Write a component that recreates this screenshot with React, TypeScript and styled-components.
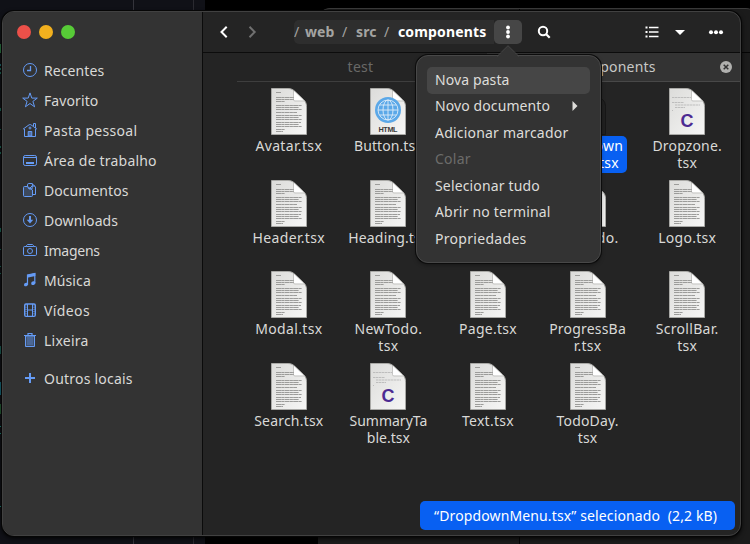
import React from "react";
import styled, { createGlobalStyle, css } from "styled-components";

const Global = createGlobalStyle`
  * { box-sizing: border-box; }
  body { margin: 0; background: #000; overflow: hidden; }
`;

const Desktop = styled.div`
  position: relative;
  width: 750px;
  height: 544px;
  overflow: hidden;
  background: #000;
  color: #d9d9d7;
  font: 14px/17px "Noto Sans", "Open Sans", sans-serif;
  white-space: nowrap;
`;

const EditorWindow = styled.div`
  position: absolute;
  inset: 0 auto 0 0;
  width: 205px;
  background: linear-gradient(90deg, transparent 133px, #34343b 133px, #34343b 134px, transparent 134px, transparent 193px, #2a2a30 193px, #2a2a30 194px, transparent 194px), #101117;
`;

const CodeMark = styled.i<{ $top: number; $height: number; $color: string }>`
  position: absolute;
  left: 0;
  top: ${(p) => p.$top}px;
  width: 1px;
  height: ${(p) => p.$height}px;
  background: ${(p) => p.$color};
`;

const BackWindow = styled.div`
  position: absolute;
  left: 318px;
  top: 8px;
  width: 440px;
  height: 560px;
  border-radius: 12px 12px 0 0;
  border-top: 1px solid #3b3b3b;
  background: linear-gradient(#050505, #050505) 201px 0 / 1px 100% no-repeat,
    linear-gradient(#050505, #050505) 0 43px / 100% 1px no-repeat, #1b1b1b;
`;

const FileManager = styled.main`
  position: absolute;
  left: 2px;
  top: 11px;
  width: 739px;
  height: 525px;
  display: flex;
  overflow: hidden;
  border: 1px solid #414141;
  border-radius: 12px;
  background: #242424;
  box-shadow: 0 0 0 1px #060606, 0 2px 5px #000;
`;

const Sidebar = styled.aside`
  width: 200px;
  flex: none;
  border-right: 1px solid #0b0b0b;
  background: #333;
`;

const WindowControls = styled.div`
  display: flex;
  gap: 8px;
  padding: 13px 0 0 14px;
`;

const Light = styled.span<{ $color: string }>`
  width: 14px;
  height: 14px;
  border-radius: 50%;
  background: ${(p) => p.$color};
`;

const Places = styled.nav`
  display: flex;
  flex-direction: column;
  padding: 16px 0 0 19px;
`;

const Place = styled.a<{ $gap?: boolean }>`
  display: flex;
  align-items: center;
  gap: 6px;
  height: 30px;
  margin-top: ${(p) => (p.$gap ? 8 : 0)}px;
  svg { width: 16px; height: 16px; color: #659bf5; fill: none; stroke: currentColor; stroke-width: 1; }
`;

const Text = styled.span<{ $ls?: number }>`
  letter-spacing: ${(p) => p.$ls ?? 0}px;
`;

const Content = styled.section`
  flex: 1;
  min-width: 0;
  display: flex;
  flex-direction: column;
`;

const Header = styled.header`
  height: 41px;
  flex: none;
  display: flex;
  align-items: center;
  border-bottom: 1px solid #0c0c0c;
  padding-left: 14px;
`;

const IconButton = styled.button<{ $w: number; $active?: boolean; $dim?: boolean; $ml?: number }>`
  display: flex;
  align-items: center;
  justify-content: center;
  width: ${(p) => p.$w}px;
  height: 24px;
  flex: none;
  margin: 0 0 0 ${(p) => p.$ml ?? 0}px;
  padding: 0;
  border: 0;
  border-radius: 5px;
  color: ${(p) => (p.$dim ? "#707070" : "#fff")};
  background: ${(p) => (p.$active ? "#464646" : "transparent")};
  svg { width: 16px; height: 16px; display: block; }
`;

const PathBar = styled.div`
  display: flex;
  align-items: center;
  width: 200px;
  height: 24px;
  margin-left: 34px;
  overflow: hidden;
  border-radius: 5px 0 0 5px;
  background: #2e2e2e;
  color: #a4a4a2;
  font-weight: 700;
  line-height: 15px;
  padding-bottom: 1px;
`;

const Crumb = styled.span<{ $w: number; $ls?: number; $current?: boolean }>`
  width: ${(p) => p.$w}px;
  flex: none;
  letter-spacing: ${(p) => p.$ls ?? 0}px;
  color: ${(p) => (p.$current ? "#fff" : "inherit")};
`;

const Slash = styled.span<{ $w: number }>`
  width: ${(p) => p.$w}px;
  flex: none;
  font-weight: 400;
`;

const Tabs = styled.div`
  display: grid;
  grid-template-columns: 250px 1fr;
  height: 29px;
  margin-left: 34px;
`;

const Tab = styled.div<{ $active?: boolean }>`
  display: flex;
  align-items: center;
  justify-content: center;
  position: relative;
  padding: 0 ${(p) => (p.$active ? 0 : 3)}px 2px 0;
  border-bottom: 1px solid ${(p) => (p.$active ? "#484848" : "#3e3e3e")};
  background: ${(p) => (p.$active ? "#333" : "transparent")};
  color: ${(p) => (p.$active ? "#c8c8c6" : "#696967")};
`;

const CloseBadge = styled.span`
  position: absolute;
  right: 8px;
  top: 8px;
  width: 12px;
  height: 12px;
  svg { display: block; }
`;

const FileGrid = styled.div`
  display: grid;
  grid-template-columns: repeat(5, 99.6px);
  grid-auto-rows: 91.7px;
  padding: 6px 0 0 36px;
`;

const File = styled.div`
  display: flex;
  flex-direction: column;
  align-items: center;
  svg { width: 36px; height: 47px; flex: none; display: block; }
`;

const FileName = styled.div<{ $selected?: boolean; $ls: number }>`
  padding: 2px 3px 0;
  text-align: center;
  letter-spacing: ${(p) => p.$ls}px;
  white-space: pre;
  ${(p) =>
    p.$selected &&
    css`
      width: 78px;
      height: 37px;
      margin-top: 1px;
      padding-top: 1px;
      border-radius: 5px;
      color: #fff;
      background: #0860f2;
    `}
`;

const Status = styled.div`
  position: absolute;
  left: 420px;
  top: 501px;
  width: 315px;
  height: 29px;
  display: flex;
  align-items: center;
  padding-left: 14px;
  border-radius: 5px;
  background: #0860f2;
  color: #fff;
  white-space: pre;
`;

const Popover = styled.div`
  position: absolute;
  left: 416px;
  top: 55px;
  width: 185px;
  height: 208px;
  padding: 11px 10px;
  border: 1px solid #484848;
  border-radius: 12px;
  background: #333;
  box-shadow: 0 0 0 1px #0c0c0c, 0 2px 4px rgba(0, 0, 0, 0.4);
`;

const Arrow = styled.svg`
  position: absolute;
  left: 79px;
  top: -11px;
  width: 24px;
  height: 13px;
`;

const MenuItem = styled.div<{ $hover?: boolean; $disabled?: boolean }>`
  display: flex;
  align-items: center;
  justify-content: space-between;
  height: 26.5px;
  padding: 0 12px 2px 8px;
  border-radius: 5px;
  color: ${(p) => (p.$disabled ? "#6c6c6a" : "#deddda")};
  background: ${(p) => (p.$hover ? "#464646" : "transparent")};
`;

const places: { name: string; ls: number; gap?: boolean; icon: React.ReactNode }[] = [
  { name: "Recentes", ls: 0.1, icon: <><circle cx="8" cy="8" r="6.5" /><path d="M8.5 4v4.5H5" strokeWidth="1.3" /></> },
  { name: "Favorito", ls: 0.1, icon: <path d="m8 .9 1.8 5.2h5.5l-4.4 3.3 1.7 5.4L8 11.5l-4.6 3.3 1.7-5.4L.7 6.1h5.5z" /> },
  { name: "Pasta pessoal", ls: 0.3, icon: <><path d="M2.5 7v7.5h11V7M1 7.2l6.2-4.5h1.6L15 7.2M11.5 4V1.5h2V6" /><path d="M6.2 14V9.5h3.6V14z" fill="currentColor" fillOpacity=".6" /><circle cx="8" cy="6" r="1" /></> },
  { name: "Área de trabalho", ls: 0.2, icon: <><rect x="1.5" y="3.5" width="13" height="10" rx="1.7" /><path d="M1.5 5.5h13" /><path d="M4 11h8" strokeWidth="2" /></> },
  { name: "Documentos", ls: 0.05, icon: <><path d="M5.5 4.5h-3a1 1 0 0 0-1 1v8a1 1 0 0 0 1 1h7a1 1 0 0 0 1-1V8z" fill="currentColor" fillOpacity=".22" /><path d="M5.5 4.5V2.8A1.3 1.3 0 0 1 6.8 1.5H10l3.5 3.5v7.5h-3M5.5 4.5 7 7h3l.5-5.5M7 7l3-3h3" /></> },
  { name: "Downloads", ls: 0.08, icon: <><circle cx="8" cy="8" r="6.5" /><path d="M8 4v5" strokeWidth="2" /><path d="M4.700 7.800h6.600L8 11.400z" fill="currentColor" stroke="none" /></> },
  { name: "Imagens", ls: -0.25, icon: <><path d="M4.5 4.5v-1l1-1h5l1 1v1h1.8a1.2 1.2 0 0 1 1.2 1.2v6.600a1.200 1.200 0 0 1-1.200 1.200H2.700a1.200 1.200 0 0 1-1.200-1.200V5.700a1.200 1.200 0 0 1 1.200-1.200zM4.500 4.500h7" /><circle cx="8" cy="9" r="2.5" /></> },
  { name: "Música", ls: 0.1, icon: <><path d="M5.5 12.7V3l7.3-1.5v9.8" strokeWidth="1.2" /><path d="M5 3.1 13.4 1v3L5 5.8zM2 13c0-2.8 4.1-2.8 4.1-.7S2 15.3 2 13zM9.2 11.5c0-2.8 4.2-2.8 4.2-.6S9.2 14 9.2 11.5z" fill="currentColor" stroke="none" /></> },
  { name: "Vídeos", ls: 0.4, icon: <><rect x="2.7" y="2" width="10.6" height="12.4" rx="1.3" strokeWidth="1.4" /><path d="M5.5 2v12M10.5 2v12M5.5 8h5" /><path d="M4 2.5v11M12 2.5v11" strokeDasharray="1 1.2" /></> },
  { name: "Lixeira", ls: 0.25, icon: <><path d="M2 3.5h12M6 3V1.5h4V3" strokeWidth="1.2" /><path d="M3.5 4v10.5h9V4z" fill="currentColor" fillOpacity=".3" /><path d="M6 5v8M8 5v8M10 5v8" opacity=".6" /></> },
  { name: "Outros locais", ls: 0.22, gap: true, icon: <path d="M8 3v10M3 8h10" strokeWidth="2" /> },
];

type Kind = "text" | "html" | "c" | "ghost";

// Line positions and widths of the printed paragraphs on a text document.
const textLines: [number, number][] = [
  [4.5, 5], [9.5, 18], [11.5, 18], [13.500, 9], [17.5, 26], [19.5, 23], [21.5, 26], [24.5, 21], [27.5, 26], [29.5, 23], [31.5, 26], [34.500, 25], [36.500, 23], [38.500, 26], [41.5, 9], [43.500, 7],
];

function DocumentIcon({ kind }: { kind: Kind }) {
  if (kind === "ghost") {
    return (
      <svg viewBox="0 0 36 47">
        <path d="M.5.5H17c3 0 5 1 7 3l8.500 8c2 2 3 4 3 7v28H.5z" fill="#202020" stroke="#171717" />
      </svg>
    );
  }
  return (
    <svg viewBox="0 0 36 47">
      <defs>
        <linearGradient id="paper" x1="0" y1="0" x2="1" y2="1">
          <stop offset="0" stopColor="#dcdcda" />
          <stop offset="1" stopColor="#f6f6f5" />
        </linearGradient>
      </defs>
      <path d="M.5.5H17c3 0 5 1 7 3l8.500 8c2 2 3 4 3 7v28H.5z" fill="url(#paper)" stroke="#a9a9a6" />
      <path d="M23 3v9.500h9.500z" fill="#fff" />
      <path d="M22.500 3v8.500q0 1.500 1.500 1.500h9" fill="none" stroke="#bcbcba" strokeWidth=".8" />
      {kind === "text" &&
        textLines.map(([y, w]) => (
          <path key={y} d={`M5 ${y}h${w}`} stroke="#9c9c9a" strokeWidth="1" strokeDasharray="5 .3 3 .3" />
        ))}
      {kind === "html" && (
        <>
          <circle cx="18" cy="22" r="13" fill="#5ba8e8" />
          <g fill="none" stroke="#dcebf8" strokeWidth=".9">
            <circle cx="18" cy="22" r="10" />
            <ellipse cx="18" cy="22" rx="5" ry="10" />
            <path d="M18 12v20M8 22h20M9.500 17h17M9.500 27h17" />
          </g>
          <text x="18" y="44.300" textAnchor="middle" textLength="19" fontFamily="Liberation Sans, sans-serif" fontWeight="700" fontSize="7.300" fill="#3c3c3c">HTML</text>
        </>
      )}
      {kind === "c" && (
        <>
          <g stroke="#b4b4b4" strokeWidth=".8" strokeDasharray="2.500 .5">
            <path d="M3 9.500h19M3 14.500h12M6 17h25M6 19.500h10M3 22.500h1" />
          </g>
          <text x="18" y="39" textAnchor="middle" fontFamily="Liberation Sans, sans-serif" fontWeight="700" fontSize="18" fill="#4c2a92">C</text>
        </>
      )}
    </svg>
  );
}

const files: ({ name: string; kind: Kind; ls: number; selected?: boolean } | null)[] = [
  { name: "Avatar.tsx", kind: "text", ls: 0.35 },
  { name: "Button.tsx", kind: "html", ls: 0.1 },
  null,
  { name: "Dropdown\nMenu.tsx", kind: "ghost", ls: 0.2, selected: true },
  { name: "Dropzone.\ntsx", kind: "c", ls: 0.15 },
  { name: "Header.tsx", kind: "text", ls: 0.35 },
  { name: "Heading.tsx", kind: "text", ls: 0.15 },
  null,
  { name: "ListTodo.\ntsx", kind: "text", ls: 0.4 },
  { name: "Logo.tsx", kind: "text", ls: 0.25 },
  { name: "Modal.tsx", kind: "text", ls: 0.35 },
  { name: "NewTodo.\ntsx", kind: "text", ls: 0.3 },
  { name: "Page.tsx", kind: "text", ls: 0.25 },
  { name: "ProgressBa\nr.tsx", kind: "text", ls: 0.2 },
  { name: "ScrollBar.\ntsx", kind: "text", ls: 0.3 },
  { name: "Search.tsx", kind: "text", ls: 0.2 },
  { name: "SummaryTa\nble.tsx", kind: "c", ls: 0 },
  { name: "Text.tsx", kind: "text", ls: 0.3 },
  { name: "TodoDay.\ntsx", kind: "text", ls: 0.15 },
];

const menu: { name: string; ls: number; hover?: boolean; disabled?: boolean; sub?: boolean }[] = [
  { name: "Nova pasta", ls: 0.1, hover: true },
  { name: "Novo documento", ls: 0.1, sub: true },
  { name: "Adicionar marcador", ls: 0.2 },
  { name: "Colar", ls: 0.25, disabled: true },
  { name: "Selecionar tudo", ls: 0.15 },
  { name: "Abrir no terminal", ls: 0.17 },
  { name: "Propriedades", ls: 0.3 },
];

const marks: [number, number, string][] = [
  [44, 9, "#2c7a45"], [64, 2, "#1c6b70"], [68, 2, "#1d6a58"], [72, 2, "#1d6a58"], [108, 3, "#1d6a58"], [129, 1, "#1d6a58"], [146, 2, "#1d6a58"], [152, 2, "#1d6a58"],
  [228, 4, "#1d6a58"], [249, 1, "#1d6a58"], [266, 1, "#1d6a58"], [273, 1, "#1d6a58"], [346, 8, "#1d6258"], [382, 13, "#176b7c"], [404, 10, "#245f35"], [426, 1, "#1d8a78"], [433, 1, "#1d8a78"], [506, 1, "#1d8a78"],
];

export default function App() {
  return (
    <Desktop>
      <Global />
      <EditorWindow>
        {marks.map(([top, height, color]) => (
          <CodeMark key={top} $top={top} $height={height} $color={color} />
        ))}
      </EditorWindow>
      <BackWindow />
      <FileManager>
        <Sidebar>
          <WindowControls>
            <Light $color="#ec5049" />
            <Light $color="#f2b01e" />
            <Light $color="#57cb37" />
          </WindowControls>
          <Places>
            {places.map((p) => (
              <Place key={p.name} $gap={p.gap}>
                <svg viewBox="0 0 16 16">{p.icon}</svg>
                <Text $ls={p.ls}>{p.name}</Text>
              </Place>
            ))}
          </Places>
        </Sidebar>
        <Content>
          <Header>
            <IconButton $w={16} aria-label="Voltar">
              <svg viewBox="0 0 16 16" fill="none" stroke="currentColor" strokeWidth="2"><path d="M9.700 2.800 4.500 8l5.200 5.200" /></svg>
            </IconButton>
            <IconButton $w={16} $ml={11} $dim aria-label="Avançar">
              <svg viewBox="0 0 16 16" fill="none" stroke="currentColor" strokeWidth="2"><path d="M5.500 2.800 10.700 8l-5.200 5.200" /></svg>
            </IconButton>
            <PathBar>
              <Slash $w={11}>/</Slash>
              <Crumb $w={37} $ls={0.1}>web</Crumb>
              <Slash $w={14}>/</Slash>
              <Crumb $w={28} $ls={0.1}>src</Crumb>
              <Slash $w={14}>/</Slash>
              <Crumb $w={92} $ls={0.15} $current>components</Crumb>
            </PathBar>
            <IconButton $w={28} $active aria-label="Menu da pasta">
              <svg viewBox="0 0 16 16" fill="currentColor"><circle cx="8" cy="3.500" r="1.900" /><circle cx="8" cy="8" r="1.900" /><circle cx="8" cy="12.500" r="1.900" /></svg>
            </IconButton>
            <IconButton $w={16} $ml={14} aria-label="Pesquisar">
              <svg viewBox="0 0 16 16" fill="none" stroke="currentColor" strokeWidth="2"><circle cx="7" cy="7" r="4.200" /><path d="m10 10 3.700 3.700" strokeWidth="2.200" /></svg>
            </IconButton>
            <IconButton $w={16} $ml={92} aria-label="Lista">
              <svg viewBox="0 0 16 16" stroke="currentColor" strokeWidth="2"><path d="M1.500 3.500h2M1.500 8h2M1.500 12.500h2" strokeWidth="2.200" /><path d="M5 3.500h9.500M5 8h9.500M5 12.500h9.500" strokeWidth="1.700" /></svg>
            </IconButton>
            <IconButton $w={16} $ml={12} aria-label="Opções de exibição">
              <svg viewBox="0 0 16 16" fill="currentColor"><path d="M3 6h10l-5 5z" /></svg>
            </IconButton>
            <IconButton $w={16} $ml={20} aria-label="Mais">
              <svg viewBox="0 0 16 16" fill="currentColor"><circle cx="3" cy="8.300" r="2" /><circle cx="8" cy="8.300" r="2" /><circle cx="13" cy="8.300" r="2" /></svg>
            </IconButton>
          </Header>
          <Tabs>
            <Tab><Text $ls={0.3}>test</Text></Tab>
            <Tab $active>
              <Text $ls={0.2}>components</Text>
              <CloseBadge>
                <svg width="12" height="12" viewBox="0 0 12 12"><circle cx="6" cy="6" r="6" fill="#b0b0ae" /><path d="m3.700 3.700 4.600 4.600m0-4.600L3.700 8.300" stroke="#333" strokeWidth="1.500" /></svg>
              </CloseBadge>
            </Tab>
          </Tabs>
          <FileGrid>
            {files.map((f, i) => (
              <File key={i}>
                {f && <DocumentIcon kind={f.kind} />}
                {f && <FileName $ls={f.ls} $selected={f.selected}>{f.name}</FileName>}
              </File>
            ))}
          </FileGrid>
        </Content>
      </FileManager>
      <Status><Text $ls={0.13}>“DropdownMenu.tsx” selecionado  (2,2 kB)</Text></Status>
      <Popover>
        <Arrow viewBox="0 0 24 13">
          <path d="M1 12 12 1l11 11v1H1z" fill="#333" />
          <path d="M1 11.500 12 .7l11 10.800" fill="none" stroke="#484848" />
        </Arrow>
        {menu.map((m) => (
          <MenuItem key={m.name} $hover={m.hover} $disabled={m.disabled}>
            <Text $ls={m.ls}>{m.name}</Text>
            {m.sub && <svg width="6" height="10" viewBox="0 0 6 10"><path d="M.500 0 5.500 5l-5 5z" fill="#deddda" /></svg>}
          </MenuItem>
        ))}
      </Popover>
    </Desktop>
  );
}
